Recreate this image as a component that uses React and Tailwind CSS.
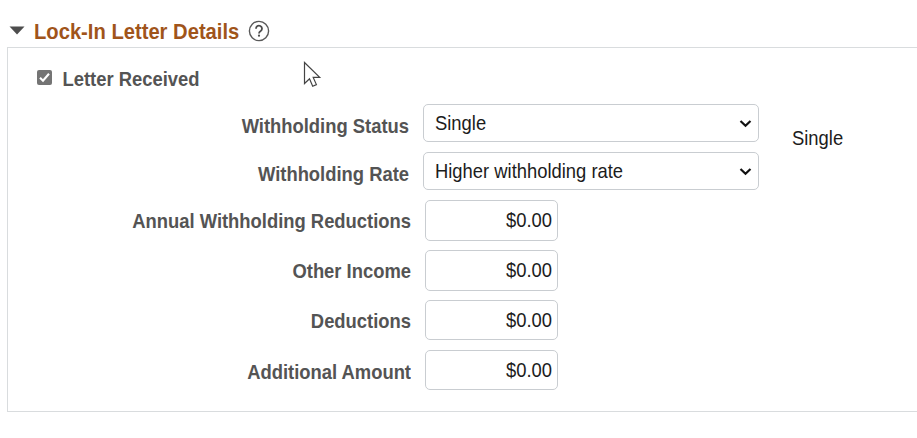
import { useState } from "react";

const SELECTS = [
    { label: "Withholding Status", value: "Single" },
    { label: "Withholding Rate", value: "Higher withholding rate" },
];

const AMOUNTS = [
    { label: "Annual Withholding Reductions", box: "h-[41px]", text: "pb-px" },
    { label: "Other Income", box: "h-[41px]", text: "pb-px" },
    { label: "Deductions", box: "h-[40px]", text: "pb-px" },
    { label: "Additional Amount", box: "h-[40px]", text: "pt-[2px]" },
];

// Slightly condensed text, used for every label and value
function Text({ className = "", children }) {
    return <span className={`inline-block scale-y-[1.05] pt-0.5 ${className}`}>{children}</span>;
}

function SelectRow({ label, value }) {
    return (
        <div className="flex h-12">
            <div className="mr-[14px] flex h-[44px] w-[401px] items-center justify-end font-bold text-[#545454]">
                <Text>{label}</Text>
            </div>
            <div className="flex h-[38px] w-[336px] items-center justify-between rounded-[5px] border border-[#c9cdd1] pl-[11px] pr-[6px]">
                <Text>{value}</Text>
                <svg className="h-[9px] w-[13px]" viewBox="0 0 13 9" fill="none">
                    <path d="M1.5 2 6.5 6.8 11.5 2" stroke="#111" strokeWidth="2.2" />
                </svg>
            </div>
        </div>
    );
}

function AmountRow({ label, box, text }) {
    return (
        <div className="flex h-[50px]">
            <div className={`mr-[14px] flex h-[42px] w-[403px] items-center justify-end font-bold text-[#545454] ${text}`}>
                <Text>{label}</Text>
            </div>
            <div className={`flex w-[133px] items-center justify-end rounded-[5px] border border-[#c9cdd1] pb-px pr-[5px] ${box}`}>
                <Text>$0.00</Text>
            </div>
        </div>
    );
}

export default function App() {
    const [received, setReceived] = useState(true);

    return (
        <div className="relative h-[438px] w-full overflow-hidden bg-white font-['Liberation_Sans',Arial,sans-serif] text-[18.4px] leading-7 text-[#1c1c1c]">
            {/* Section header */}
            <header className="flex h-[47px] items-center pl-[9px] pt-[15px]">
                <svg className="mb-px mr-[9px] h-[9px] w-4" viewBox="0 0 16 9">
                    <path d="M.5.5h15L8 8.5z" fill="#4d4d4d" />
                </svg>
                <h1 className="pb-px text-[20.2px] font-bold leading-6 text-[#a0541a]">
                    <Text>Lock-In Letter Details</Text>
                </h1>
                <svg className="ml-[9px] h-[22px] w-[22px]" viewBox="0 0 22 22" fill="none">
                    <circle cx="11" cy="11" r="9.6" stroke="#595959" strokeWidth="1.4" />
                    <path d="M8 8.7a3 3 0 1 1 4.7 2.4c-1.1.7-1.7 1.1-1.7 2.4" stroke="#4a4a4a" strokeWidth="1.8" />
                    <circle cx="11" cy="15.7" r="1.1" fill="#4a4a4a" />
                </svg>
            </header>

            <section className="ml-[7px] h-[365px] border-y border-l border-[#d9dcde]">
                <label className="flex h-[56px] items-center pl-[29px] pt-[6px]">
                    <input
                        type="checkbox"
                        checked={received}
                        onChange={() => setReceived(!received)}
                        className="peer sr-only"
                    />
                    <svg className="mb-[3px] h-[15px] w-[15px]" viewBox="0 0 15 15" fill="none">
                        <rect width="15" height="15" rx="2" fill="#747474" />
                        {received && <path d="m3 7.8 3 3 6-7" stroke="#fff" strokeWidth="2.1" />}
                    </svg>
                    <Text className="ml-[10.5px] font-bold text-[#545454]">Letter Received</Text>
                </label>

                <div className="flex">
                    <div>
                        {SELECTS.map((field) => (
                            <SelectRow key={field.label} {...field} />
                        ))}
                    </div>
                    <Text className="ml-[33px] mt-[19px] h-[30px]">Single</Text>
                </div>

                {AMOUNTS.map((field) => (
                    <AmountRow key={field.label} {...field} />
                ))}
            </section>

            {/* Mouse pointer */}
            <svg className="absolute left-[303px] top-[61px] h-[27px] w-[19px]" viewBox="0 0 19 27">
                <path
                    d="M1.5 1.5v21l5-4.8 3.2 7.5 3.7-1.6-3.2-7.2h6.5z"
                    fill="#fff"
                    stroke="#444"
                    strokeWidth="1.2"
                />
            </svg>
        </div>
    );
}
